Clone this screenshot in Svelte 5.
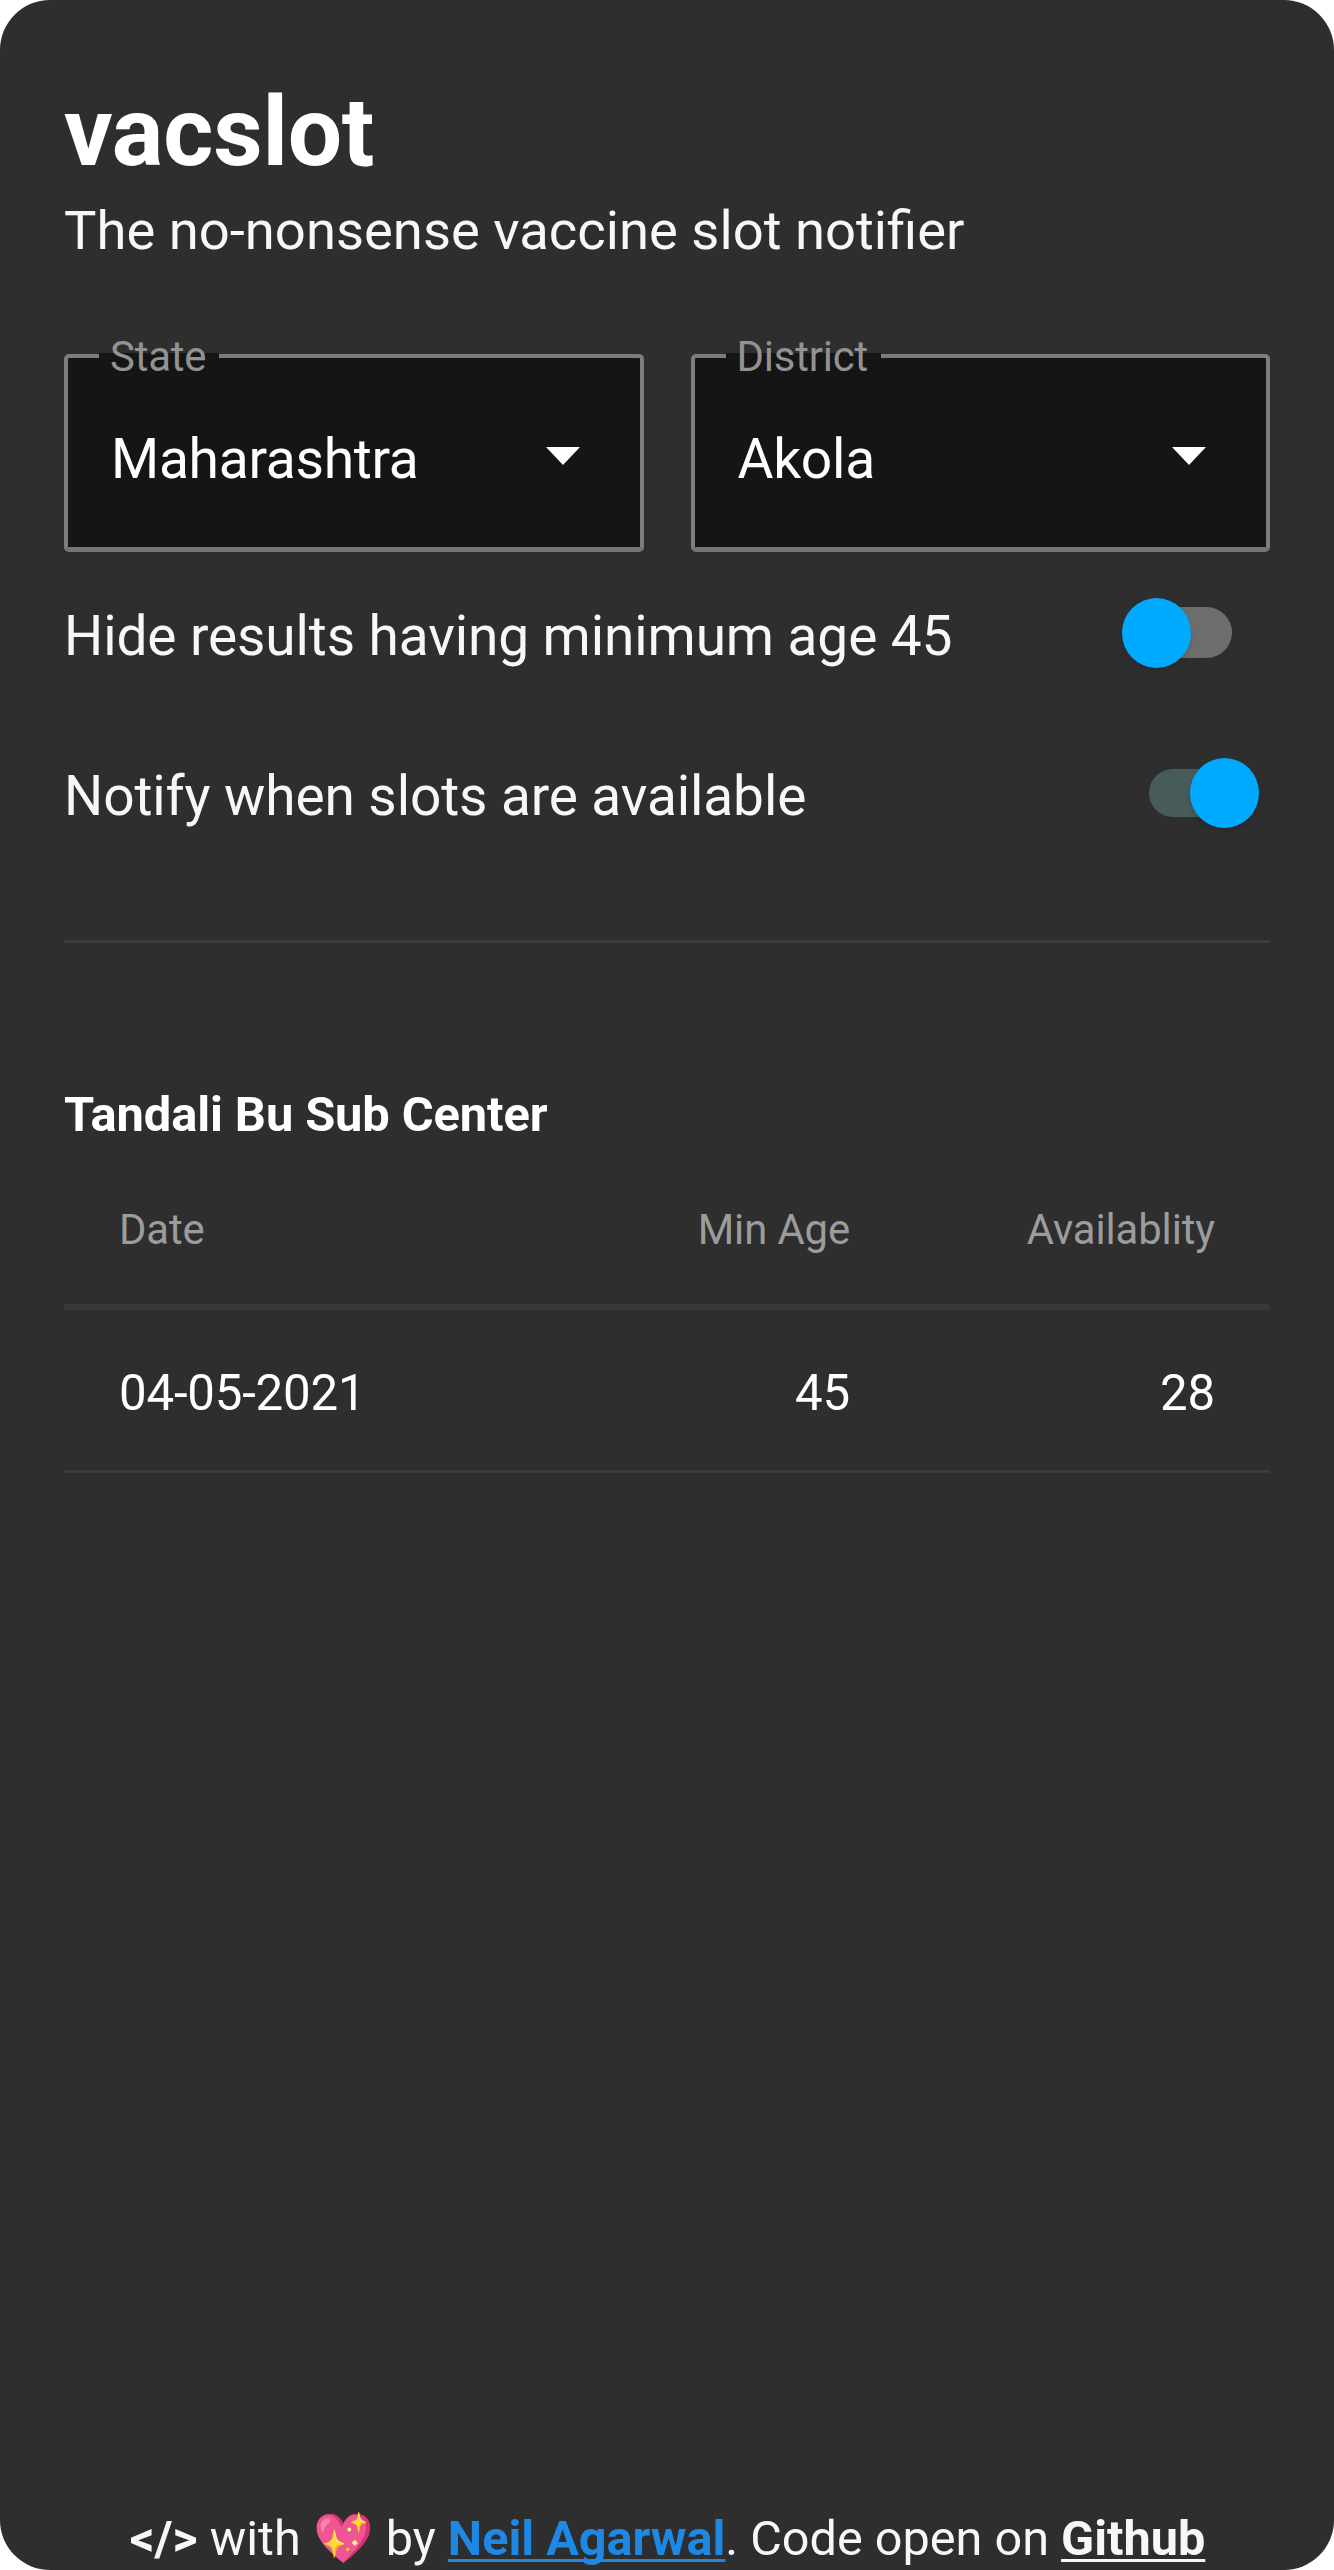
<script>
  const fields = [
    { label: 'State', value: 'Maharashtra' },
    { label: 'District', value: 'Akola' }
  ]
  let settings = $state([
    { label: 'Hide results having minimum age 45', on: false },
    { label: 'Notify when slots are available', on: true }
  ])
  const centers = [
    { name: 'Tandali Bu Sub Center', sessions: [{ date: '04-05-2021', age: 45, slots: 28 }] }
  ]
</script>

<div class="page">
  <header>
    <h1>vacslot</h1>
    <p class="tagline">The no-nonsense vaccine slot notifier</p>
  </header>

  <div class="fields">
    {#each fields as field}
      <div class="select">
        <span class="label">{field.label}</span>
        <span class="value">{field.value}</span>
        <svg class="arrow" viewBox="0 0 34 18"><path d="M0 0h34L17 18z" fill="#fff" /></svg>
      </div>
    {/each}
  </div>

  {#each settings as setting}
    <div class="setting">
      <span class="name">{setting.label}</span>
      <button
        class="switch"
        class:on={setting.on}
        role="switch"
        aria-checked={setting.on}
        aria-label={setting.label}
        onclick={() => (setting.on = !setting.on)}
      ><span class="thumb"></span></button>
    </div>
  {/each}

  <hr />

  <main>
    {#each centers as center}
      <h2>{center.name}</h2>
      <div class="row head">
        <span>Date</span><span>Min Age</span><span>Availablity</span>
      </div>
      {#each center.sessions as s}
        <div class="row">
          <span>{s.date}</span><span>{s.age}</span><span>{s.slots}</span>
        </div>
      {/each}
    {/each}
  </main>

  <footer>
    <b>&lt;/&gt;</b> with 💖 by <a class="author" href="#author">Neil Agarwal</a>. Code open on <a href="#source">Github</a>
  </footer>
</div>

<style>
  :global(body) {
    background: #fff;
  }
  .page {
    box-sizing: border-box;
    display: flex;
    flex-direction: column;
    width: 1334px;
    height: 2570px;
    padding: 83px 64px 0 64px;
    border-radius: 50px;
    overflow: hidden;
    background: #2e2e2e;
    color: #fff;
    font-family: Roboto, sans-serif;
    font-size: 55px;
  }
  h1, h2, p {
    margin: 0;
  }
  h1 {
    font-size: 96.3px;
    line-height: 100px;
    letter-spacing: -0.2px;
  }
  .tagline {
    margin-top: 12px;
    font-size: 54.4px;
    line-height: 72px;
    color: #f7f7f7;
  }
  .fields {
    display: grid;
    grid-template-columns: 1fr 1fr;
    gap: 47px;
    margin-top: 87px;
  }
  .select {
    position: relative;
    box-sizing: border-box;
    display: flex;
    align-items: center;
    justify-content: space-between;
    height: 198px;
    padding: 15px 60px 0 43px;
    border: 4px solid #7d7d7d;
    border-bottom: 5px solid #757575;
    border-radius: 5px;
    background: #151515;
  }
  .value {
    margin-top: -3px;
    line-height: 64px;
    font-size: 55.2px;
    letter-spacing: -0.3px;
  }
  .arrow {
    width: 34px;
    height: 18px;
    margin-top: -8px;
  }
  .label {
    position: absolute;
    top: -5px;
    left: 31px;
    height: 10px;
    padding: 0 13px 0 11px;
    background: #151515;
    color: #929292;
    font-size: 41.9px;
    line-height: 8px;
    letter-spacing: -0.2px;
  }
  .setting {
    display: flex;
    align-items: center;
    justify-content: space-between;
    height: 160px;
    color: #f7f7f7;
  }
  .fields + .setting {
    margin-top: 5px;
  }
  .name {
    margin-bottom: 2px;
    letter-spacing: -0.1px;
  }
  .switch {
    display: flex;
    align-items: center;
    box-sizing: border-box;
    width: 102px;
    height: 51px;
    margin: 0 38px 9px 0;
    padding: 0;
    border: 0;
    border-radius: 26px;
    background: #6d6d6d;
  }
  .thumb {
    flex: none;
    width: 69px;
    height: 70px;
    margin-left: -8px;
    border-radius: 50%;
    background: #00aaff;
    box-shadow: 0 3px 5px rgba(0, 0, 0, 0.12);
  }
  .switch.on {
    justify-content: flex-end;
    height: 48px;
    margin-right: 19px;
    background: #475b59;
  }
  .switch.on .thumb {
    margin: 0 -8px 0 0;
  }
  hr {
    width: 100%;
    height: 3px;
    margin: 63px 0 0;
    border: 0;
    background: #3c3c3c;
  }
  main {
    flex: 1;
  }
  h2 {
    margin-top: 136px;
    font-size: 48.8px;
    line-height: 72px;
    letter-spacing: -0.1px;
  }
  .row {
    display: grid;
    grid-template-columns: 1fr 231px 365px;
    align-items: center;
    box-sizing: border-box;
    height: 163px;
    padding: 5px 55px 0 55px;
    border-bottom: 3px solid #3b3b3b;
    font-size: 49.2px;
    letter-spacing: -0.2px;
  }
  .row span + span {
    text-align: right;
  }
  .row.head {
    height: 159px;
    padding-top: 3px;
    border-bottom: 6px solid #383838;
    color: #9c9c9c;
    font-size: 41.8px;
    letter-spacing: -0.1px;
  }
  footer {
    height: 64px;
    margin: 0 -65px 0 -64px;
    font-size: 48.6px;
    line-height: 66px;
    text-align: center;
    white-space: nowrap;
    color: #f7f7f7;
  }
  a {
    color: #f7f7f7;
    font-weight: 700;
    text-decoration: underline;
    text-decoration-thickness: 3px;
    text-underline-offset: 4px;
    text-decoration-skip-ink: none;
  }
  .author {
    color: #1e88e5;
  }
</style>
